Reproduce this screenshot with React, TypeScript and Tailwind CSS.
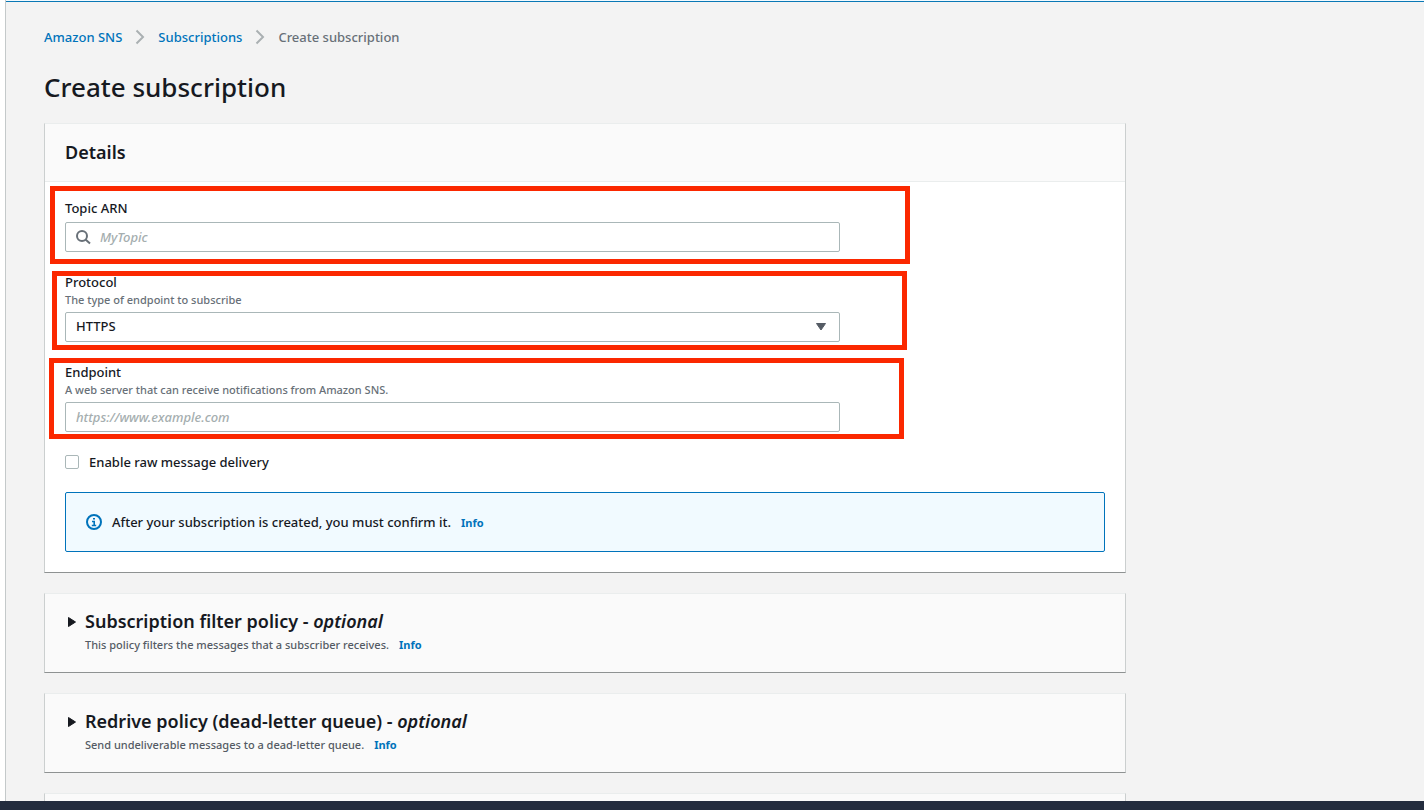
import { ReactNode } from "react";

const policies = [
  {
    title: "Subscription filter policy",
    description: "This policy filters the messages that a subscriber receives.",
  },
  {
    title: "Redrive policy (dead-letter queue)",
    description: "Send undeliverable messages to a dead-letter queue.",
  },
];

const inputStyle =
  "block w-full h-[30px] rounded-xs border border-[#aab7b8] bg-white px-[10px] text-[13px] font-medium text-[#16191f] placeholder:italic placeholder:text-[#a5aeaf] outline-none";

function Chevron() {
  return (
    <svg
      className="mx-3 shrink-0"
      width="12"
      height="16"
      viewBox="0 0 12 16"
      fill="none"
      stroke="#aab0b2"
      strokeWidth="2"
      aria-hidden="true"
    >
      <path d="M2.5 1.5 9 8l-6.5 6.5" />
    </svg>
  );
}

function InfoLink() {
  return (
    <a
      href="#info"
      className="ml-[10px] text-[11px] leading-none font-bold text-[#0073bb]"
    >
      Info
    </a>
  );
}

// red frame drawn over a field
function Highlight({ className }: { className: string }) {
  return (
    <div
      className={`pointer-events-none absolute border-[5px] border-[#fb2800] ${className}`}
    />
  );
}

function Field({
  id,
  label,
  description,
  highlight,
  children,
}: {
  id: string;
  label: string;
  description?: string;
  highlight: string;
  children: ReactNode;
}) {
  return (
    <div className="relative w-full max-w-[775px]">
      <label htmlFor={id} className="block text-[13px] leading-5">
        {label}
      </label>
      {description && (
        <p className="text-[11px] leading-4 text-[#687078]">{description}</p>
      )}
      <div className="relative mt-1">{children}</div>
      <Highlight className={highlight} />
    </div>
  );
}

function Card({ children }: { children?: ReactNode }) {
  return (
    <section className="min-h-20 shrink-0 border border-t-[#eaeded] border-x-[#cbcfcf] border-b-[#8e9292] bg-[#fafafa]">
      {children}
    </section>
  );
}

function PolicyCard({
  title,
  description,
}: {
  title: string;
  description: string;
}) {
  return (
    <Card>
      <div className="flex px-5 pt-[15px] pb-[19px]">
        <svg
          className="mt-[7px] w-5 shrink-0"
          width="20"
          height="12"
          viewBox="0 0 20 12"
          aria-hidden="true"
        >
          <path
            d="M3.5 1.5v9L10.5 6z"
            fill="#16191f"
            stroke="#16191f"
            strokeLinejoin="round"
          />
        </svg>
        <div>
          <h2 className="text-[18px] leading-6 font-semibold">
            <button type="button" aria-expanded="false">
              {title} - <i>optional</i>
            </button>
          </h2>
          <p className="mt-1 text-[11px] leading-4 text-[#545b64]">
            {description}
            <InfoLink />
          </p>
        </div>
      </div>
    </Card>
  );
}

export default function App() {
  return (
    <div className="flex h-screen flex-col overflow-hidden bg-white font-['Noto_Sans','Open_Sans',sans-serif] font-medium text-[#16191f]">
      <div className="flex min-h-0 flex-1 pl-[5px]">
        <main className="flex flex-1 flex-col overflow-hidden border-l border-[#c4c9ca] bg-[#f3f3f3]">
          <div className="h-[2px] shrink-0 border-b border-[#0a78b5] bg-[#f1faff]" />
          <div className="flex w-full max-w-[1120px] flex-col pt-[25px] pl-[38px]">
            <nav
              aria-label="Breadcrumb"
              className="flex items-center text-[13px] leading-5"
            >
              <a href="#sns" className="text-[#0073bb]">
                Amazon SNS
              </a>
              <Chevron />
              <a href="#subscriptions" className="text-[#0073bb]">
                Subscriptions
              </a>
              <Chevron />
              <span className="text-[#687078]">Create subscription</span>
            </nav>

            <h1 className="mt-[22px] text-[26px] leading-9">
              Create subscription
            </h1>

            <form className="mt-[18px] flex flex-col gap-5">
              <Card>
                <h2 className="border-b border-[#eaeded] px-5 pt-[14px] pb-[15px] text-[18px] leading-7 font-semibold">
                  Details
                </h2>
                <div className="flex flex-col gap-5 bg-white px-5 pt-4 pb-5">
                  <Field
                    id="topic"
                    label="Topic ARN"
                    highlight="-top-3 -bottom-3 -left-[15px] -right-[70px]"
                  >
                    <svg
                      className="absolute top-[7px] left-[10px]"
                      width="16"
                      height="16"
                      viewBox="0 0 16 16"
                      fill="none"
                      stroke="#687078"
                      strokeWidth="2"
                      aria-hidden="true"
                    >
                      <circle cx="7" cy="7" r="5" />
                      <path d="m10.5 10.5 4.5 4" />
                    </svg>
                    <input
                      id="topic"
                      type="text"
                      placeholder="MyTopic"
                      className={`${inputStyle} pl-[34px]`}
                    />
                  </Field>

                  <Field
                    id="protocol"
                    label="Protocol"
                    description="The type of endpoint to subscribe"
                    highlight="-top-px -bottom-2 -left-[13px] -right-[67px]"
                  >
                    <select
                      id="protocol"
                      defaultValue="HTTPS"
                      className={`${inputStyle} appearance-none`}
                    >
                      <option>HTTP</option>
                      <option>HTTPS</option>
                      <option>Email</option>
                    </select>
                    <svg
                      className="pointer-events-none absolute top-[10px] right-[13px]"
                      width="12"
                      height="10"
                      viewBox="0 0 12 10"
                      aria-hidden="true"
                    >
                      <path
                        d="M1.5 1.5h9L6 8z"
                        fill="#545b64"
                        stroke="#545b64"
                        strokeLinejoin="round"
                      />
                    </svg>
                  </Field>

                  <Field
                    id="endpoint"
                    label="Endpoint"
                    description="A web server that can receive notifications from Amazon SNS."
                    highlight="-top-1 -bottom-[7px] -left-4 -right-16"
                  >
                    <input
                      id="endpoint"
                      type="url"
                      placeholder="https://www.example.com"
                      className={inputStyle}
                    />
                  </Field>

                  <label className="flex items-center gap-[10px] text-[13px] leading-5">
                    <input
                      type="checkbox"
                      className="size-[14px] appearance-none rounded-xs border border-[#aab7b8] bg-white checked:bg-[#0073bb]"
                    />
                    Enable raw message delivery
                  </label>

                  <div className="flex items-center rounded-xs border border-[#0073bb] bg-[#f1faff] px-5 py-[19px] text-[13px] leading-5">
                    <svg
                      className="mr-[10px] shrink-0"
                      width="16"
                      height="16"
                      viewBox="0 0 16 16"
                      fill="none"
                      stroke="#0073bb"
                      strokeWidth="2"
                      aria-hidden="true"
                    >
                      <circle cx="8" cy="8" r="7" />
                      <path
                        d="M6 7.5h2.2V11M5.8 11.5h4.4M7 4.7h2"
                        strokeWidth="1.6"
                      />
                    </svg>
                    <p>
                      After your subscription is created, you must confirm it.
                      <InfoLink />
                    </p>
                  </div>
                </div>
              </Card>

              {policies.map((policy) => (
                <PolicyCard key={policy.title} {...policy} />
              ))}
              <Card />
            </form>
          </div>
        </main>
      </div>
      <footer className="h-[9px] shrink-0 bg-[#232c3e]" />
    </div>
  );
}
